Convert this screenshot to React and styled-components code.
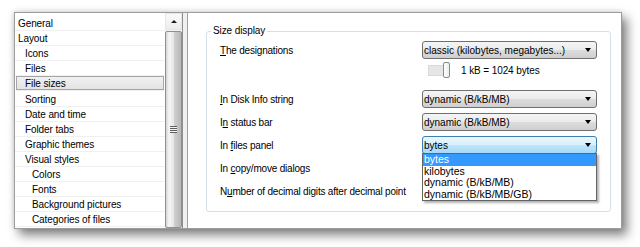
import React from 'react';
import styled, { createGlobalStyle } from 'styled-components';

const GlobalStyle = createGlobalStyle`
  html, body {
    margin: 0;
    padding: 0;
    background: #fff;
  }
  body {
    font-family: "Liberation Sans", Arial, sans-serif;
    font-size: 10px;
    color: #000;
  }
`;

const Stage = styled.div`
  width: 640px;
  height: 247px;
  box-sizing: border-box;
  padding: 12px 18px 18px 14px;
  overflow: hidden;
`;

const Window = styled.div`
  display: flex;
  gap: 4px;
  height: 217px;
  box-sizing: border-box;
  border: 1px solid #9c9c9c;
  background: #f0f0f0;
  box-shadow: 5px 6px 10px rgba(0, 0, 0, 0.5), -1px -1px 5px rgba(0, 0, 0, 0.12);
`;

const ListPane = styled.div`
  display: flex;
  width: 168px;
  box-sizing: border-box;
  background: #fff;
  border-right: 1px solid #8e8f8f;
`;

const List = styled.div`
  flex: 1;
  padding-top: 3px;
  overflow: hidden;
`;

const Item = styled.div`
  display: flex;
  align-items: center;
  height: 15.1px;
  box-sizing: border-box;
  padding-top: 1px;
  padding-left: ${p => 3 + p.$level * 7 - (p.$selected ? 1 : 0)}px;
  margin: ${p => (p.$selected ? '0 1px 0 1px' : '0')};
  border-bottom: 1px solid #f0f0f0;
  letter-spacing: -0.1px;
  white-space: nowrap;
  background: ${p => (p.$selected ? 'linear-gradient(#f2f2f2, #e2e2e2)' : 'transparent')};
  box-shadow: ${p => (p.$selected ? 'inset 0 0 0 1px #a6a6a6' : 'none')};
`;

const ScrollBar = styled.div`
  display: flex;
  flex-direction: column;
  width: 17px;
  background: #f2f2f2;
`;

const UpButton = styled.div`
  display: flex;
  align-items: center;
  justify-content: center;
  height: 17px;
  box-sizing: border-box;
  border: 1px solid #e6e6e6;
  background: linear-gradient(#fafafa, #ececec);

  &::after {
    content: '';
    border-left: 3px solid transparent;
    border-right: 3px solid transparent;
    border-bottom: 3px solid #1a1a1a;
  }
`;

const Thumb = styled.div`
  flex: 1;
  display: flex;
  align-items: center;
  justify-content: center;
  margin-top: 1px;
  box-sizing: border-box;
  border: 1px solid #8e8f8f;
  border-radius: 2px;
  background: linear-gradient(to right, #d4d4d4, #f6f6f6 20%, #e6e6e6 50%, #d0d0d0 52%, #b8b8b8);
`;

const Grip = styled.div`
  width: 7px;
  height: 7px;
  background: repeating-linear-gradient(#5d5d5d 0 1px, #f4f4f4 1px 2px);
`;

const RightPane = styled.div`
  flex: 1;
  box-sizing: border-box;
  background: #fff;
  border-left: 1px solid #a0a0a0;
  padding: 12px 10px 0 18px;
`;

const Group = styled.fieldset`
  position: relative;
  margin: 0;
  border: 1px solid #d5dfe5;
  border-radius: 3px;
  padding: 4px 13px 11px 13px;
`;

const Legend = styled.legend`
  margin-left: -9px;
  padding: 0 2px;
  line-height: 12px;
  font-size: 10px;
  letter-spacing: -0.1px;
`;

const Row = styled.div`
  display: grid;
  grid-template-columns: 1fr 175px;
  align-items: center;
  height: ${p => p.$h || 18}px;
  margin-top: ${p => (p.$mt !== undefined ? p.$mt : 5)}px;
  &:first-of-type {
    margin-top: 0;
  }
`;

const Label = styled.div`
  white-space: nowrap;
  letter-spacing: -0.2px;

  u {
    text-underline-offset: 1px;
  }
`;

const Combo = styled.div`
  position: relative;
  display: flex;
  align-items: center;
  justify-content: space-between;
  height: 18px;
  box-sizing: border-box;
  padding-left: 1px;
  border: 1px solid ${p => (p.$active ? '#3c7fb1' : '#707070')};
  border-radius: 3px;
  background: ${p =>
    p.$active
      ? 'linear-gradient(#eaf6fd, #d9f0fc 50%, #bee6fd 51%, #a7d9f5)'
      : 'linear-gradient(#f5f5f5, #ebebeb 50%, #dddddd 51%, #cfcfcf)'};
  white-space: nowrap;

  &::after {
    content: '';
    margin-right: 5px;
    border-left: 3.5px solid transparent;
    border-right: 3.5px solid transparent;
    border-top: 4px solid #000;
  }
`;

const SliderRow = styled.div`
  grid-column: 2;
  display: flex;
  align-items: center;
  padding-left: 6px;
`;

const Track = styled.div`
  width: 16px;
  height: 11px;
  box-sizing: border-box;
  border: 1px solid #dadada;
  background: #e6e6e6;
`;

const SliderThumb = styled.div`
  width: 7px;
  height: 16px;
  box-sizing: border-box;
  margin-left: -1px;
  border: 1px solid #8a8a8a;
  border-radius: 2px;
  background: linear-gradient(to right, #ffffff, #ececec);
`;

const SliderText = styled.span`
  margin-left: 11px;
  letter-spacing: -0.1px;
`;

const Popup = styled.div`
  position: absolute;
  top: 100%;
  left: -1px;
  right: -1px;
  z-index: 2;
  border: 1px solid #646464;
  background: #fff;
  box-shadow: 2px 2px 2px rgba(0, 0, 0, 0.3);
`;

const Option = styled.div`
  height: 11.5px;
  line-height: 11.5px;
  padding-left: 1px;
  font-size: 10.5px;
  color: ${p => (p.$hot ? '#fff' : '#000')};
  background: ${p => (p.$hot ? '#3399ff' : 'transparent')};
`;

const tree = [
  ['General', 0],
  ['Layout', 0],
  ['Icons', 1],
  ['Files', 1],
  ['File sizes', 1, true],
  ['Sorting', 1],
  ['Date and time', 1],
  ['Folder tabs', 1],
  ['Graphic themes', 1],
  ['Visual styles', 1],
  ['Colors', 2],
  ['Fonts', 2],
  ['Background pictures', 2],
  ['Categories of files', 2],
];

const options = ['bytes', 'kilobytes', 'dynamic (B/kB/MB)', 'dynamic (B/kB/MB/GB)'];

export default function App() {
  return (
    <>
      <GlobalStyle />
      <Stage>
        <Window>
          <ListPane>
            <List>
              {tree.map(([name, level, selected]) => (
                <Item key={name} $level={level} $selected={selected}>
                  {name}
                </Item>
              ))}
            </List>
            <ScrollBar>
              <UpButton />
              <Thumb>
                <Grip />
              </Thumb>
            </ScrollBar>
          </ListPane>
          <RightPane>
            <Group>
              <Legend>Size display</Legend>
              <Row>
                <Label><u>T</u>he designations</Label>
                <Combo>classic (kilobytes, megabytes...)</Combo>
              </Row>
              <Row $h={16} $mt={3}>
                <SliderRow>
                  <Track />
                  <SliderThumb />
                  <SliderText>1 kB = 1024 bytes</SliderText>
                </SliderRow>
              </Row>
              <Row $mt={12}>
                <Label><u>I</u>n Disk Info string</Label>
                <Combo>dynamic (B/kB/MB)</Combo>
              </Row>
              <Row>
                <Label>I<u>n</u> status bar</Label>
                <Combo>dynamic (B/kB/MB)</Combo>
              </Row>
              <Row>
                <Label>In <u>f</u>iles panel</Label>
                <Combo $active>
                  bytes
                  <Popup>
                    {options.map((o, i) => (
                      <Option key={o} $hot={i === 0}>{o}</Option>
                    ))}
                  </Popup>
                </Combo>
              </Row>
              <Row>
                <Label>In <u>c</u>opy/move dialogs</Label>
              </Row>
              <Row>
                <Label>N<u>u</u>mber of decimal digits after decimal point</Label>
              </Row>
            </Group>
          </RightPane>
        </Window>
      </Stage>
    </>
  );
}
